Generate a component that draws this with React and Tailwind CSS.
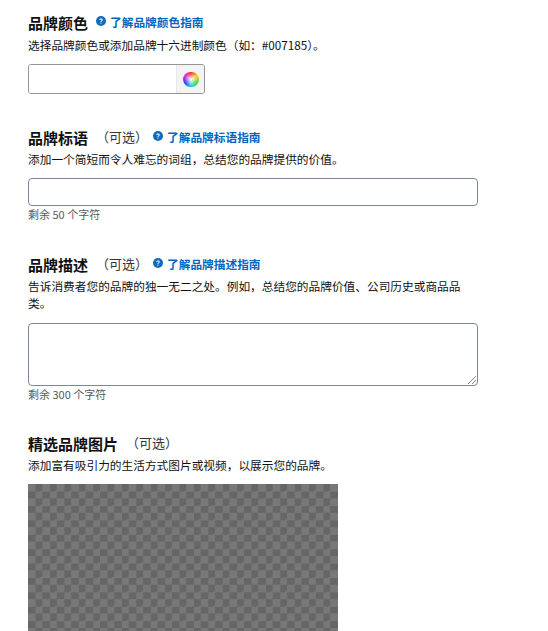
const font = 'font-["Noto_Sans_CJK_SC","Liberation_Sans",sans-serif]';

function HelpLink({ children }) {
  return (
    <a className="flex items-center gap-[4px] text-[11.700px] leading-[16px] font-bold text-[#0066c0]">
      <svg viewBox="0 0 16 16" className="w-[10px] h-[10px] -mt-[2px]">
        <circle cx="8" cy="8" r="8" fill="#0f6cbd" />
        <path d="M5.400 6.200C5.500 4.700 6.600 4 8 4c1.500 0 2.700.8 2.700 2.200 0 1.100-.7 1.600-1.400 2.100-.5.4-.7.6-.7 1.200H7.200c0-1 .3-1.500 1-2 .5-.4.9-.7.9-1.200 0-.6-.5-.9-1.100-.9-.7 0-1.100.4-1.200 1z" fill="#fff" />
        <rect x="7.100" y="10.500" width="1.600" height="1.700" fill="#fff" />
      </svg>
      {children}
    </a>
  );
}

function Heading({ title, optional, link }) {
  return (
    <div className="flex items-center h-[20px]">
      <h3 className="text-[15px] leading-[20px] font-bold text-[#0f1111]">{title}</h3>
      {optional && <span className="ml-[8px] text-[13px] leading-[20px] text-[#333] -mt-[2px]">&#xFF08;可选&#xFF09;</span>}
      {link && <div className={optional ? 'ml-[5px] -mt-[2px]' : 'ml-[8px] -mt-[2px]'}><HelpLink>{link}</HelpLink></div>}
    </div>
  );
}

export default function App() {
  return (
    <div className={`${font} h-[631px] overflow-hidden bg-white pl-[28px] pt-[13px] text-[#0f1111]`}>
      <section>
        <Heading title="品牌颜色" link="了解品牌颜色指南" />
        <p className="mt-[3px] text-[11.700px] leading-[18px]">选择品牌颜色或添加品牌十六进制颜色&#xFF08;如&#xFF1A;#007185&#xFF09;。</p>
        <div className="mt-[10px] flex w-[177px] h-[30px] border border-[#949494] rounded-[3px] overflow-hidden">
          <div className="flex-1 bg-white" />
          <div className="w-[28px] bg-[#f3f3f3] border-l border-[#e7e7e7] flex items-center justify-center">
            <div className="w-[16px] h-[15px] rounded-full bg-[radial-gradient(circle,#ffffff_0%,#ffffff00_60%),conic-gradient(#ff3030,#ffd020,#30e040,#20d0e0,#3040f0,#d030e0,#ff3030)]" />
          </div>
        </div>
      </section>

      <section className="mt-[34px]">
        <Heading title="品牌标语" optional link="了解品牌标语指南" />
        <p className="mt-[2px] text-[11.700px] leading-[18px]">添加一个简短而令人难忘的词组&#xFF0C;总结您的品牌提供的价值。</p>
        <div className="mt-[10px] w-[450px] h-[28px] border border-[#7d879c] rounded-[4px] bg-white" />
        <p className="text-[11px] leading-[16px] text-[#565959]">剩余 50 个字符</p>
      </section>

      <section className="mt-[33px]">
        <Heading title="品牌描述" optional link="了解品牌描述指南" />
        <p className="mt-[2px] w-[440px] text-[11.700px] leading-[17px]">告诉消费者您的品牌的独一无二之处。例如&#xFF0C;总结您的品牌价值、公司历史或商品品类。</p>
        <div className="relative mt-[12px] w-[450px] h-[63px] border border-[#7d879c] rounded-[4px] bg-white">
          <svg viewBox="0 0 10 10" className="absolute right-[0px] bottom-[0px] w-[10px] h-[10px]">
            <path d="M1 9 9 1M5 9 9 5" stroke="#555" strokeWidth="1" strokeDasharray="1 .5" fill="none" />
          </svg>
        </div>
        <p className="text-[11px] leading-[16px] text-[#565959]">剩余 300 个字符</p>
      </section>

      <section className="mt-[32px]">
        <Heading title="精选品牌图片" optional />
        <p className="mt-[2px] text-[11.700px] leading-[18px]">添加富有吸引力的生活方式图片或视频&#xFF0C;以展示您的品牌。</p>
        <div className="mt-[10px] w-[310px] h-[200px] bg-[conic-gradient(#666666_25%,#787878_0_50%,#666666_0_75%,#787878_0)] bg-[length:14.400px_14.400px]" />
      </section>
    </div>
  );
}
